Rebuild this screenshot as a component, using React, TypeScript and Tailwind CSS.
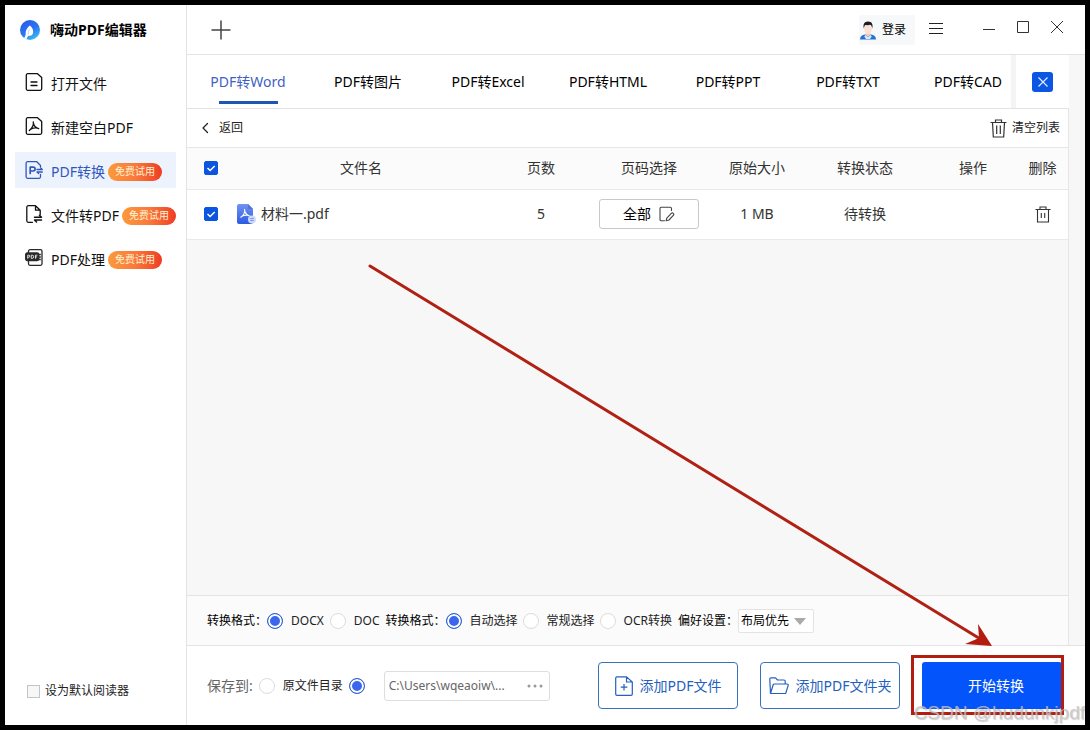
import type { ReactNode } from 'react';

const tabs = ['PDF转Word', 'PDF转图片', 'PDF转Excel', 'PDF转HTML', 'PDF转PPT', 'PDF转TXT', 'PDF转CAD'];

function Stroke({ children, className, box = 18 }: { children: ReactNode; className: string; box?: number }) {
  return (
    <svg
      viewBox={`0 0 ${box} ${box}`}
      className={`shrink-0 ${className}`}
      fill="none"
      stroke="currentColor"
      strokeWidth="1.3"
      strokeLinecap="round"
      strokeLinejoin="round"
      aria-hidden="true"
    >
      {children}
    </svg>
  );
}

function Logo() {
  return (
    <svg viewBox="0 0 20 20" className="size-5 shrink-0" aria-hidden="true">
      <defs>
        <linearGradient id="logo" x1="0" y1="0" x2="0.6" y2="1">
          <stop offset="0" stopColor="#2a55ee" />
          <stop offset="0.6" stopColor="#2b74ee" />
          <stop offset="1" stopColor="#3fb4f2" />
        </linearGradient>
      </defs>
      <circle cx="10" cy="10" r="10" fill="url(#logo)" />
      <path d="M9.800 5.500C7.200 7.500 5.400 10.600 5.600 14.200c0 1.700-.8 3.100-1.700 3.900L6.600 19.300c.2-1.300.9-2.700 1.900-3.500 2.600.2 4.600-1.300 4.700-3.900.1-2.600-1.400-4.800-3.400-6.400z" fill="#fff" />
      <path d="M9.400 9.500c-.9 1.700-1.300 3.400-1.300 5" stroke="#a9cbf9" strokeWidth="0.800" fill="none" />
    </svg>
  );
}

const page = <path d="M2.800 0.700h9.700l4.200 3.800v11.300a1.500 1.500 0 0 1-1.500 1.500H2.800a1.500 1.500 0 0 1-1.500-1.500V2.200A1.500 1.500 0 0 1 2.800 0.700z" />;

const navItems: { text: string; icon: ReactNode; badge?: boolean; active?: boolean }[] = [
  {
    text: '打开文件',
    icon: (
      <Stroke className="size-[18px]">
        {page}
        <path d="M6 9h6M6 12.500h6" />
      </Stroke>
    ),
  },
  {
    text: '新建空白PDF',
    icon: (
      <Stroke className="size-[18px]">
        {page}
        <path d="M8.300 4.800c.6 2.600-.8 5.800-4 8.700M8.500 6.500c.6 2.700 2 4.300 5.200 5.200M5.800 12.300c2-1.200 4.200-1.600 6.500-1.200" />
      </Stroke>
    ),
  },
  {
    text: 'PDF转换',
    badge: true,
    active: true,
    icon: (
      <Stroke className="size-[18px]">
        <path d="M15.500 6V4.500L11.800 0.700H2.600a1.500 1.500 0 0 0-1.500 1.500v13.600a1.500 1.500 0 0 0 1.500 1.500h11.400a1.500 1.500 0 0 0 1.500-1.500V13.500" />
        <path d="M5.200 12.500V6.200h3a1.900 1.900 0 0 1 0 3.800h-3" strokeWidth="1.700" />
        <path d="M12 8.500h5.300l-1.700-1.600M17.300 11h-5.300l1.700 1.600" />
      </Stroke>
    ),
  },
  {
    text: '文件转PDF',
    badge: true,
    icon: (
      <Stroke className="size-[18px]">
        <path d="M7.500 17.300H3.300A1.500 1.500 0 0 1 1.800 15.800V2.200A1.500 1.500 0 0 1 3.300 0.700H10.500l4.700 4.500V9.500M10.500 0.700v4.500h4.700" />
        <path d="M9.500 12.300h7l-2-2M16.500 15h-7l2 2" strokeWidth="1.500" />
      </Stroke>
    ),
  },
  {
    text: 'PDF处理',
    badge: true,
    icon: (
      <svg viewBox="0 0 18 18" className="size-[18px] shrink-0" fill="none" stroke="#2a2a2a" strokeWidth="1.300" aria-hidden="true">
        <path d="M3.500 4V2.200A1.500 1.500 0 0 1 5 0.700h10.500A1.500 1.500 0 0 1 17 2.200v12.600a1.500 1.500 0 0 1-1.500 1.500H5a1.500 1.500 0 0 1-1.500-1.500V12" />
        <rect x="0.700" y="4" width="13" height="7.500" rx="1.500" fill="#2a2a2a" />
        <path d="M2.700 9.700V6.200h1.200a1 1 0 0 1 0 2H2.700M6.300 6.200v3.200h.8a1.600 1.600 0 0 0 0-3.200zM10.500 9.700V6.200h1.900M10.500 7.900h1.600" stroke="#fff" strokeWidth="0.800" />
        <path d="M13.500 5.500h2.300M13.500 8h2.300M13.500 10.500h2.300" />
      </svg>
    ),
  },
];

function Radio({ name, text, checked }: { name: string; text?: string; checked?: boolean }) {
  return (
    <label className="flex items-center gap-2 whitespace-nowrap">
      <input
        type="radio"
        name={name}
        defaultChecked={checked}
        aria-label={text ?? '自定义目录'}
        className="size-4 shrink-0 appearance-none rounded-full border border-[#dcdcdc] bg-white checked:border-[#2f62cc] checked:bg-[#3c66ee] checked:shadow-[inset_0_0_0_2px_white]"
      />
      {text}
    </label>
  );
}

function Tick({ label }: { label: string }) {
  return (
    <label className="relative mx-auto block size-[14px]">
      <input
        type="checkbox"
        defaultChecked
        aria-label={label}
        className="peer block size-[14px] appearance-none rounded-xs border border-[#bbb] bg-white checked:border-[#0b55e0] checked:bg-[#0b55e0]"
      />
      <svg viewBox="0 0 14 14" className="pointer-events-none absolute inset-0 hidden size-[14px] peer-checked:block" fill="none" stroke="#fff" strokeWidth="1.500">
        <path d="M3.500 7l2.600 2.500 4.600-4.500" />
      </svg>
    </label>
  );
}

function TitleBar() {
  return (
    <header className="flex h-[50px] shrink-0 items-center border-b border-[#e3e3e3] pr-[22px] pl-6">
      <button type="button" aria-label="新建标签">
        <svg viewBox="0 0 20 20" className="size-5" stroke="#444" strokeWidth="1.500" aria-hidden="true">
          <path d="M10 0.500v19M0.500 10h19" />
        </svg>
      </button>
      <div className="ml-auto flex items-center">
        <button type="button" className="mt-px flex h-[30px] items-center gap-[5px] rounded-xs bg-[#f7f8f9] pr-[9px] text-xs text-black">
          <svg viewBox="0 0 18 20" className="h-5 w-[18px]" aria-hidden="true">
            <path d="M1 19.500c0-3 2-4.500 5-5h6c3 .5 5 2 5 5z" fill="#2673d4" />
            <path d="M6.800 12.500h4.400v2.500L9 17l-2.200-2z" fill="#f4cdbd" />
            <path d="M6.300 15L9 17.300 11.700 15l1 1.500L11 19H7l-1.700-2.500z" fill="#dfeaf8" />
            <ellipse cx="9" cy="8.500" rx="4" ry="5.200" fill="#fbe0d4" />
            <path d="M4.800 8.500C4 4.500 5 1.500 9 1.500s5.200 2.800 4.300 7c-.4-2-1-3.300-2-3.700-2 .6-4 .3-5 .2-.8.700-1.200 1.900-1.500 3.500z" fill="#1d1d22" />
          </svg>
          登录
        </button>
        <button type="button" aria-label="菜单" className="ml-[14px]">
          <svg viewBox="0 0 14 14" className="mb-1 size-[14px]" stroke="#222" aria-hidden="true">
            <path d="M0 2.500h14M0 7.500h14M0 12.500h14" />
          </svg>
        </button>
        <div className="mb-1.5 ml-10 flex gap-[22px]">
          <button type="button" aria-label="最小化">
            <svg viewBox="0 0 12 12" className="size-3" stroke="#333" aria-hidden="true">
              <path d="M0 8.500h12" />
            </svg>
          </button>
          <button type="button" aria-label="最大化">
            <svg viewBox="0 0 12 12" className="size-3" fill="none" stroke="#333" aria-hidden="true">
              <path d="M0.500 0.500h11v11h-11z" />
            </svg>
          </button>
          <button type="button" aria-label="关闭">
            <svg viewBox="0 0 12 12" className="size-3" stroke="#333" aria-hidden="true">
              <path d="M0 0l12 12M12 0L0 12" />
            </svg>
          </button>
        </div>
      </div>
    </header>
  );
}

export default function App() {
  return (
    <div className="relative flex min-h-screen overflow-hidden border-[5px] border-black bg-white font-['Noto_Sans','Noto_Sans_CJK_SC',sans-serif] text-sm text-[#111]">
      <aside className="flex w-[182px] shrink-0 flex-col border-r border-[#e3e3e3]">
        <div className="flex h-[50px] items-center gap-2.5 pl-[15px] text-sm font-bold text-black">
          <Logo />
          嗨动PDF编辑器
        </div>
        <nav className="flex flex-col gap-2 px-2.5 pt-[9px]">
          {navItems.map((item) => (
            <a
              key={item.text}
              href="#"
              className={`flex h-9 items-center gap-2 pl-2.5 whitespace-nowrap ${item.active ? 'bg-[#ecf3fd] text-[#3156bd]' : 'text-[#111]'}`}
            >
              {item.icon}
              <span className="flex items-center gap-[3px] pt-[3px]">
                {item.text}
                {item.badge && (
                  <span className="flex h-[18px] w-[54px] shrink-0 items-center justify-center rounded-full bg-linear-to-r from-[#fa9a3c] via-[#f9793a] to-[#ee3a24] text-[10px] text-[#fff3d6]">
                    免费试用
                  </span>
                )}
              </span>
            </a>
          ))}
        </nav>
        <label className="mt-auto mb-6 flex items-center gap-[5px] pl-[22px] text-xs leading-5 text-[#222]">
          <input type="checkbox" className="size-[13px] appearance-none border border-[#c4c4c4] bg-[#f7f7f8] checked:bg-[#0b55e0]" />
          设为默认阅读器
        </label>
      </aside>

      <div className="flex min-w-0 flex-1 flex-col">
        <TitleBar />

        <div className="flex flex-1 flex-col bg-[#f7f7f7] pr-4">
          <div className="flex h-[54px] border-b border-[#e3e3e3] bg-white">
            <div role="tablist" className="flex min-w-0 flex-1 overflow-hidden pl-[1px]">
              {tabs.map((tab, i) => (
                <button
                  key={tab}
                  type="button"
                  role="tab"
                  aria-selected={i === 0}
                  className={`flex h-full w-[120px] shrink-0 flex-col items-center justify-end gap-[7px] pb-[4px] ${i === 0 ? 'text-[#3f5fc4]' : 'text-black'}`}
                >
                  <span className="leading-6">{tab}</span>
                  <span className={`h-[3px] w-[59px] ${i === 0 ? 'bg-[#1f55b5]' : ''}`} />
                </button>
              ))}
            </div>
            <div className="flex w-[58px] shrink-0 items-center justify-center border-l-[5px] border-[#f4f4f4]">
              <button type="button" aria-label="关闭面板" className="flex h-5 w-[21px] items-center justify-center rounded-[3px] bg-[#0b57e3]">
                <svg viewBox="0 0 10 10" className="size-2.5" stroke="#e6efff" strokeWidth="1.100" aria-hidden="true">
                  <path d="M0.500 0.500l9 9M9.500 0.500l-9 9" />
                </svg>
              </button>
            </div>
          </div>

          <div className="flex flex-1 flex-col border-r border-[#e6e6e6]">
            <div className="flex h-[39px] items-center justify-between border-b border-[#e6e6e6] bg-white pr-2 pl-3 text-xs">
              <button type="button" className="flex items-center gap-2 text-[#222]">
                <Stroke className="size-3" box={12}>
                  <path d="M8.500 1.500L4 6l4.500 4.500" />
                </Stroke>
                返回
              </button>
              <button type="button" className="flex items-center gap-[5px] text-[#222]">
                <svg viewBox="0 0 17 19" className="h-[19px] w-[17px]" fill="none" stroke="#333" strokeWidth="1.200" aria-hidden="true">
                  <path d="M0.500 3.500h16M5.500 3.500V1h6v2.500M2.500 3.500l.8 14.500h10.400l.8-14.500M6.700 6.500v8.500M10.300 6.500v8.500" />
                </svg>
                清空列表
              </button>
            </div>

            <table className="w-full table-fixed text-center text-[#333]">
              <colgroup>
                <col className="w-[48px]" />
                <col />
                <col className="w-[108px]" />
                <col className="w-[108px]" />
                <col className="w-[108px]" />
                <col className="w-[108px]" />
                <col className="w-[108px]" />
                <col className="w-[41px]" />
              </colgroup>
              <thead>
                <tr className="h-[41px] border-b border-[#e9e9e9] bg-[#fbfbfb]">
                  <th><Tick label="全选" /></th>
                  <th className="font-normal">文件名</th>
                  <th className="font-normal">页数</th>
                  <th className="font-normal">页码选择</th>
                  <th className="font-normal">原始大小</th>
                  <th className="font-normal">转换状态</th>
                  <th className="font-normal">操作</th>
                  <th className="pr-2.5 font-normal whitespace-nowrap">删除</th>
                </tr>
              </thead>
              <tbody>
                <tr className="h-[50px] border-b border-[#e9e9e9] bg-white">
                  <td><Tick label="选择 材料一.pdf" /></td>
                  <td>
                    <div className="flex items-center gap-[5px] pl-0.5">
                      <svg viewBox="0 0 19 20" className="h-5 w-[19px]" aria-hidden="true">
                        <defs>
                          <linearGradient id="doc" x1="0" y1="0" x2="0" y2="1">
                            <stop offset="0" stopColor="#7294ee" />
                            <stop offset="1" stopColor="#2c5be4" />
                          </linearGradient>
                        </defs>
                        <path d="M2 0h9l5 5v13a2 2 0 0 1-2 2H2a2 2 0 0 1-2-2V2a2 2 0 0 1 2-2z" fill="url(#doc)" />
                        <path d="M11 0l5 5h-3.500A1.500 1.500 0 0 1 11 3.500z" fill="#4f74e0" />
                        <path d="M7.500 5c.8 2.500-.6 6-4 8.500M7.800 7.500c.8 2.400 2 3.700 5 4.500M4.500 12.500c2-1.300 4.300-1.700 7-1.200" fill="none" stroke="#fff" strokeWidth="1.100" />
                        <circle cx="15" cy="15.500" r="4" fill="#cddafb" />
                        <path d="M13.200 14.500h3.600M13.200 16.500h3.600" stroke="#6f8fe8" strokeWidth="0.900" />
                      </svg>
                      材料一.pdf
                    </div>
                  </td>
                  <td>5</td>
                  <td>
                    <button type="button" className="mx-auto flex h-[30px] w-[100px] items-center justify-center gap-2 rounded-[3px] border border-[#c9c9c9] bg-white text-black">
                      全部
                      <Stroke className="size-4 text-[#444]" box={16}>
                        <path d="M12.500 4.500V2.600a1.300 1.300 0 0 0-1.300-1.300H2.300A1.300 1.300 0 0 0 1 2.600v10.800a1.300 1.300 0 0 0 1.300 1.300H5.500M7.800 12.200l4.500-4.800a1.300 1.300 0 0 1 2 2l-4.300 4.600-2.900.7z" strokeWidth="1.100" />
                      </Stroke>
                    </button>
                  </td>
                  <td>1 MB</td>
                  <td>待转换</td>
                  <td />
                  <td className="pr-2.5">
                    <button type="button" aria-label="删除" className="mx-auto block">
                      <svg viewBox="0 0 16 17" className="h-[17px] w-4" fill="none" stroke="#333" strokeWidth="1.100" aria-hidden="true">
                        <path d="M0.500 3.500h15M5 3.500V1h6v2.500M2.500 3.500V16h11V3.500M6.300 7v5M9.700 7v5" />
                      </svg>
                    </button>
                  </td>
                </tr>
              </tbody>
            </table>

            <div className="mt-auto flex h-[50px] items-center gap-1.5 border-t border-[#e3e3e3] bg-[#fbfbfb] pl-5 text-xs text-[#222]">
              <div role="radiogroup" aria-label="转换格式" className="flex items-center">
                <span className="whitespace-nowrap text-black">转换格式：</span>
                <div className="flex gap-1.5">
                  <Radio name="format" text="DOCX" checked />
                  <Radio name="format" text="DOC" />
                </div>
              </div>
              <div role="radiogroup" aria-label="转换方式" className="flex items-center">
                <span className="whitespace-nowrap text-black">转换格式：</span>
                <div className="flex gap-[5px]">
                  <Radio name="mode" text="自动选择" checked />
                  <Radio name="mode" text="常规选择" />
                  <Radio name="mode" text="OCR转换" />
                </div>
              </div>
              <div className="flex items-center">
                <label htmlFor="layout" className="whitespace-nowrap text-black">偏好设置：</label>
                <div className="relative">
                  <select id="layout" className="h-6 w-[76px] appearance-none rounded-xs border border-[#e3e3e3] bg-white pl-0.5 text-xs text-black">
                    <option>布局优先</option>
                  </select>
                  <svg viewBox="0 0 12 7" className="pointer-events-none absolute top-[9px] right-2 h-[7px] w-3" aria-hidden="true">
                    <path d="M0 0h12L6 7z" fill="#aaa" />
                  </svg>
                </div>
              </div>
            </div>
          </div>
        </div>

        <footer className="flex h-20 shrink-0 items-center border-t border-[#e3e3e3] pr-[23px] pl-5 whitespace-nowrap">
          <div role="radiogroup" aria-label="保存到" className="flex items-center gap-1.5 text-xs text-[#222]">
            <span className="text-sm text-[#666]">保存到:</span>
            <Radio name="target" text="原文件目录" />
            <Radio name="target" checked />
          </div>
          <div className="ml-[19px] flex h-[30px] w-[166px] items-center rounded-[3px] border border-[#dedede] bg-white pr-1.5 pl-1">
            <input aria-label="保存路径" readOnly value="C:\Users\wqeaoiw\..." className="min-w-0 flex-1 text-xs text-[#666] outline-none" />
            <button type="button" aria-label="浏览">
              <svg viewBox="0 0 16 4" className="h-1 w-4" fill="#999" aria-hidden="true">
                <circle cx="2" cy="2" r="1.500" />
                <circle cx="8" cy="2" r="1.500" />
                <circle cx="14" cy="2" r="1.500" />
              </svg>
            </button>
          </div>
          <div className="ml-auto flex gap-[22px]">
            <button type="button" className="flex h-[47px] w-[140px] items-center justify-center gap-[7px] rounded-sm border border-[#3a70c0] text-[#2460bd]">
              <svg viewBox="0 0 18 20" className="h-5 w-[18px]" fill="none" stroke="currentColor" strokeWidth="1.200" aria-hidden="true">
                <path d="M11.500 0.800H2A1.300 1.300 0 0 0 0.700 2v16A1.300 1.300 0 0 0 2 19.300h14a1.300 1.300 0 0 0 1.300-1.300V6zM11.500 0.800V6h5.800M9 8v6.500M5.700 11.200h6.600" />
              </svg>
              添加PDF文件
            </button>
            <button type="button" className="flex h-[47px] w-[140px] items-center justify-center gap-[7px] rounded-sm border border-[#3a70c0] text-[#2460bd]">
              <svg viewBox="0 0 20 18" className="h-[18px] w-5" fill="none" stroke="currentColor" strokeWidth="1.200" strokeLinejoin="round" aria-hidden="true">
                <path d="M1.500 16.500L0.800 2A1.200 1.200 0 0 1 2 0.800h4.500L8.500 3H15a1.200 1.200 0 0 1 1.200 1.200V7M1.500 16.500L4.200 7.800A1.200 1.200 0 0 1 5.400 7h12.800a1.100 1.100 0 0 1 1 1.400l-2.300 7.300a1.200 1.200 0 0 1-1.200.8z" />
              </svg>
              添加PDF文件夹
            </button>
            <div className="relative">
              <button type="button" className="h-[47px] w-[140px] rounded-[3px] bg-[#0355fb] pl-2 text-white">开始转换</button>
              <div className="pointer-events-none absolute -top-[7px] -right-[2px] -bottom-[6px] -left-[11px] border-3 border-[#b51c10]" />
            </div>
          </div>
        </footer>
      </div>

      <svg viewBox="0 0 640 400" className="pointer-events-none absolute top-[255px] left-[355px] h-[400px] w-[640px]" aria-hidden="true">
        <path d="M10 6L622 380" stroke="#b02013" strokeWidth="3" strokeLinecap="round" />
        <path d="M632 386L618 364L619 378L605 384z" fill="#b51c10" />
      </svg>
      <span className="pointer-events-none absolute right-0 -bottom-[2px] font-['Liberation_Sans',sans-serif] text-[19px] leading-7 text-[#c4c4c4]/80 [text-shadow:1px_1px_1px_#8886]">
        CSDN @hudunkjpdf
      </span>
    </div>
  );
}
